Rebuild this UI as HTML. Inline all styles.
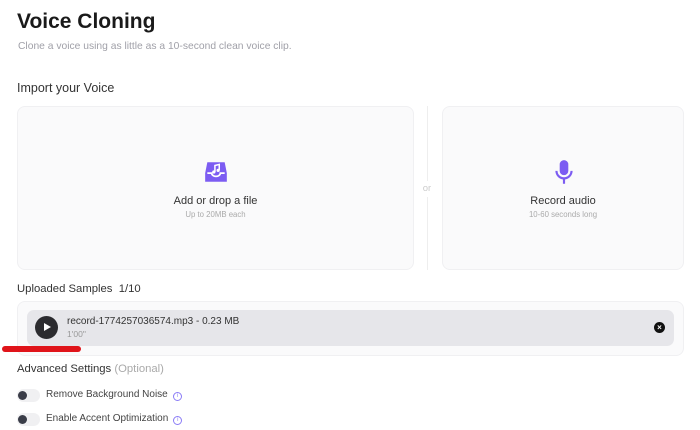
<!DOCTYPE html>
<html><head><style>
*{margin:0;padding:0;box-sizing:border-box}
body{width:700px;height:430px;background:#fff;font-family:"Liberation Sans",sans-serif;position:relative;overflow:hidden;color:#222}
.a{position:absolute}
.box{position:absolute;background:#fafafb;border:1px solid #f0f0f2;border-radius:8px}
.c{text-align:center;width:100%;position:absolute}
.tog{position:absolute;left:17px;width:23px;height:13px;border-radius:7px;background:#f0f0f2}
.tog i{position:absolute;left:1px;top:2px;width:9px;height:9px;border-radius:50%;background:#3a3d48}
.info{display:inline-block;width:9px;height:9px;border:1px solid #8b7cf6;border-radius:50%;font-size:6px;line-height:7px;text-align:center;color:#8b7cf6;vertical-align:0px;margin-left:5px}
</style></head><body>
<div class="a" style="left:17px;top:10px;font-size:21px;font-weight:bold;color:#1a1a1a">Voice Cloning</div>
<div class="a" style="left:18px;top:41px;font-size:10.3px;color:#a0a0a8">Clone a voice using as little as a 10-second clean voice clip.</div>
<div class="a" style="left:17px;top:81px;font-size:12.5px;color:#333">Import your Voice</div>
<div class="box" style="left:17px;top:106px;width:397px;height:164px">
 <svg class="a" style="left:185px;top:52px" width="26" height="26" viewBox="0 0 24 24"><path d="M4 3h16l2 10v8H2v-8z" fill="#7c5cf2"/><path d="M4 13h4a4 3 0 0 0 8 0h4" fill="none" stroke="#fff" stroke-width="1.6"/><path d="M11 12V6l4-1v5" fill="none" stroke="#fff" stroke-width="1.4"/><circle cx="10" cy="12" r="1.5" fill="#fff"/><circle cx="14" cy="10.5" r="1.5" fill="#fff"/></svg>
 <div class="c" style="top:88px;font-size:11px;color:#333">Add or drop a file</div>
 <div class="c" style="top:103px;font-size:7.8px;color:#aaa">Up to 20MB each</div>
</div>
<div class="a" style="left:427px;top:106px;width:1px;height:164px;background:#eee"></div>
<div class="a" style="left:420px;top:181px;width:14px;height:16px;background:#fff;font-size:9.5px;color:#ccc;text-align:center;line-height:16px">or</div>
<div class="box" style="left:442px;top:106px;width:242px;height:164px">
 <svg class="a" style="left:110px;top:52px" width="22" height="28" viewBox="0 0 20 26"><rect x="6" y="1" width="8" height="14" rx="4" fill="#7c5cf2"/><path d="M3 11a7 7 0 0 0 14 0" fill="none" stroke="#7c5cf2" stroke-width="2"/><path d="M10 18v5" stroke="#7c5cf2" stroke-width="2"/></svg>
 <div class="c" style="top:88px;font-size:11px;color:#333">Record audio</div>
 <div class="c" style="top:103px;font-size:7.8px;color:#aaa">10-60 seconds long</div>
</div>
<div class="a" style="left:17px;top:283px;font-size:11.3px;color:#333">Uploaded Samples&nbsp;&nbsp;1/10</div>
<div class="box" style="left:17px;top:301px;width:667px;height:55px"></div>
<div class="a" style="left:27px;top:310px;width:647px;height:36px;background:#e6e6ea;border-radius:7px"></div>
<div class="a" style="left:35px;top:316px;width:23px;height:23px;border-radius:50%;background:#2b2b2f"></div>
<div class="a" style="left:44px;top:323px;width:0;height:0;border-left:7px solid #fff;border-top:4.5px solid transparent;border-bottom:4.5px solid transparent"></div>
<div class="a" style="left:67px;top:316px;font-size:10px;color:#333">record-1774257036574.mp3 - 0.23 MB</div>
<div class="a" style="left:67px;top:329px;font-size:8.5px;color:#999">1'00''</div>
<div class="a" style="left:654px;top:322px;width:11px;height:11px;border-radius:50%;background:#111;color:#fff;font-size:8px;line-height:11px;text-align:center;font-weight:bold">×</div>
<div class="a" style="left:2px;top:346px;width:79px;height:6px;background:#e0141a;border-radius:3px"></div>
<div class="a" style="left:17px;top:363px;font-size:11.3px;color:#333">Advanced Settings <span style="color:#aaa">(Optional)</span></div>
<div class="tog" style="top:389px"><i></i></div>
<div class="a" style="left:46px;top:389px;font-size:10px;color:#444">Remove Background Noise<span class="info">i</span></div>
<div class="tog" style="top:413px"><i></i></div>
<div class="a" style="left:46px;top:413px;font-size:10px;color:#444">Enable Accent Optimization<span class="info">i</span></div>
</body></html>
